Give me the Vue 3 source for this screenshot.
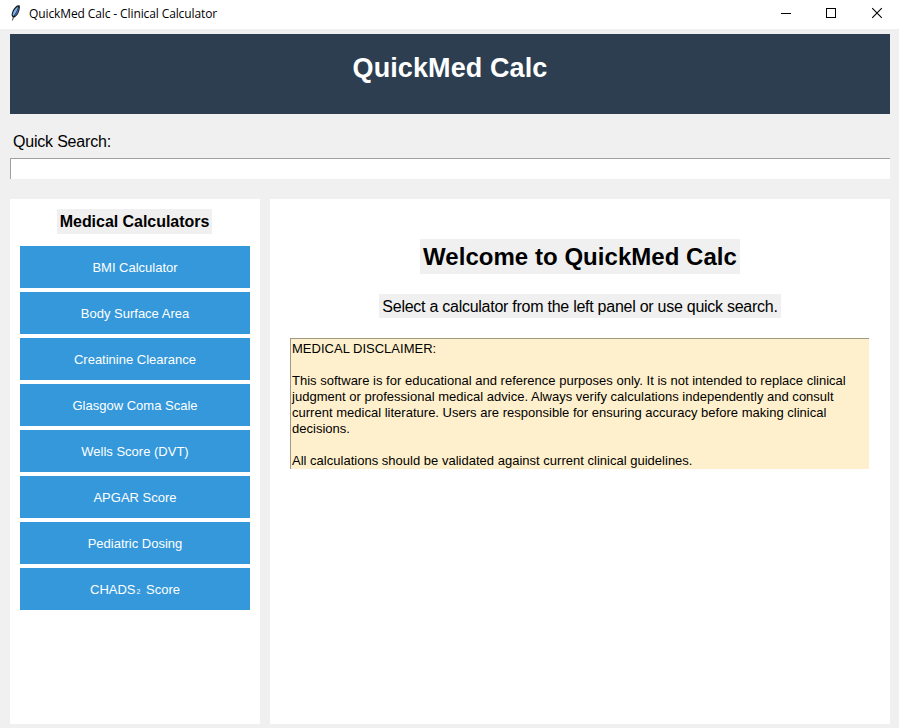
<script setup>
import { ref } from 'vue'

const query = ref('')
const calculators = [
  { label: 'BMI Calculator' },
  { label: 'Body Surface Area' },
  { label: 'Creatinine Clearance' },
  { label: 'Glasgow Coma Scale' },
  { label: 'Wells Score (DVT)' },
  { label: 'APGAR Score' },
  { label: 'Pediatric Dosing' },
  { label: 'CHADS', sub: '2', tail: ' Score' },
]
const disclaimer = [
  'MEDICAL DISCLAIMER:',
  '',
  'This software is for educational and reference purposes only. It is not intended to replace clinical',
  'judgment or professional medical advice. Always verify calculations independently and consult',
  'current medical literature. Users are responsible for ensuring accuracy before making clinical',
  'decisions.',
  '',
  'All calculations should be validated against current clinical guidelines.',
]
</script>

<template>
  <div class="window">
    <div class="titlebar">
      <svg class="feather" width="12" height="18" viewBox="0 0 12 18">
        <path d="M3.2 16.5 L3.8 13.5 L2.6 11.5 C2.6 7.5 5.6 2.4 9 1.2 L10.8 1.4 C11.2 5 9.8 10.6 5.6 13.4 L4.6 13.4 L4 16.5 Z" fill="#14181e" />
        <path d="M3.6 11 C4 7.5 6.4 3.8 9 2.4 C9 5 7 8.5 4.6 12 Z" fill="#7fb2e6" />
        <path d="M9.8 2.8 C10.2 6.5 8.6 10 5.8 12.2 L5.4 11.8 C7.4 8.8 9 6 9.8 2.8 Z" fill="#4478b5" />
      </svg>
      <span class="caption">QuickMed Calc - Clinical Calculator</span>
      <div class="controls">
        <svg width="46" height="28" viewBox="0 0 46 28" shape-rendering="crispEdges"><path d="M18 13.5H28" stroke="#000" /></svg>
        <svg width="46" height="28" viewBox="0 0 46 28" shape-rendering="crispEdges"><rect x="17.5" y="8.5" width="9" height="9" fill="none" stroke="#000" /></svg>
        <svg width="46" height="28" viewBox="0 0 46 28"><path d="M17.2 8.2L26.8 17.8M26.8 8.2L17.2 17.8" stroke="#000" stroke-width="1.1" /></svg>
      </div>
    </div>

    <header class="banner"><h1>QuickMed Calc</h1></header>

    <label class="search-label" for="search"><span>Quick Search:</span></label>
    <input id="search" v-model="query" class="search" type="text" autocomplete="off" />

    <main class="content">
      <nav class="sidebar">
        <h2>Medical Calculators</h2>
        <button v-for="c in calculators" :key="c.label" type="button">
          <span>{{ c.label }}<small v-if="c.sub">{{ c.sub }}</small>{{ c.tail }}</span>
        </button>
      </nav>
      <section class="panel">
        <h2>Welcome to QuickMed Calc</h2>
        <p class="hint"><span>Select a calculator from the left panel or use quick search.</span></p>
        <div class="disclaimer">
          <div v-for="(line, i) in disclaimer" :key="i" class="line">{{ line }}</div>
        </div>
      </section>
    </main>
  </div>
</template>

<style>
body {
  margin: 0;
  background: #f0f0f0;
}
</style>

<style scoped>
.window {
  box-sizing: border-box;
  display: flex;
  flex-direction: column;
  height: 728px;
  padding-bottom: 4px;
  background: #f0f0f0;
  color: #000;
  font-family: "Liberation Sans", Arial, sans-serif;
  overflow: hidden;
  white-space: pre;
}
h1, h2, p { margin: 0; }
.titlebar {
  display: flex;
  align-items: flex-start;
  height: 29px;
  padding-left: 9px;
  background: #fff;
}
.feather { margin-top: 4px; }
.caption {
  margin-left: 8px;
  font: 12px/28px "Open Sans", sans-serif;
  letter-spacing: -0.11px;
}
.controls {
  display: flex;
  margin-left: auto;
  margin-right: -2px;
}
.banner {
  height: 80px;
  margin: 5px 9px 0 10px;
  background: #2c3e50;
  color: #fff;
  text-align: center;
}
h1 {
  font-size: 27px;
  line-height: 68px;
  letter-spacing: 0.1px;
}
.search-label {
  margin: 16px 0 0 13px;
  height: 28px;
  font-size: 16px;
  line-height: 24px;
  letter-spacing: -0.2px;
}
.search {
  box-sizing: border-box;
  height: 21px;
  margin: 0 9px 0 10px;
  padding: 0 2px;
  border: 0;
  border-top: 1px solid #a0a0a0;
  border-left: 1px solid #a0a0a0;
  background: #fff;
  font: 13px "Liberation Sans", sans-serif;
  outline: none;
}
.content {
  flex: 1;
  display: flex;
  gap: 10px;
  margin: 20px 9px 0 10px;
}
.sidebar {
  box-sizing: border-box;
  width: 250px;
  padding: 10px;
  display: flex;
  flex-direction: column;
  align-items: center;
  gap: 4px;
  background: #fff;
}
.sidebar h2 {
  width: 155px;
  height: 25px;
  margin-right: 1px;
  margin-bottom: 8px;
  background: #f0f0f0;
  font-size: 16px;
  line-height: 25px;
  letter-spacing: -0.04px;
  text-align: center;
}
button {
  width: 230px;
  height: 42px;
  padding: 2px 0 0;
  border: 0;
  background: #3498db;
  color: #fff;
  font: 13px/40px "Liberation Sans", sans-serif;
  white-space: pre;
}
small { font-size: 7px; padding: 0 2px 0 1px; }
.panel {
  flex: 1;
  display: flex;
  flex-direction: column;
  align-items: center;
  padding: 40px 20px 0;
  background: #fff;
}
.panel h2 {
  width: 320px;
  height: 35px;
  background: #f0f0f0;
  font-size: 24px;
  line-height: 36px;
  letter-spacing: 0.04px;
  text-align: center;
}
.hint {
  width: 402px;
  height: 24px;
  margin: 20px 0;
  background: #f0f0f0;
  font-size: 16px;
  line-height: 25px;
  letter-spacing: -0.26px;
  text-align: center;
}
.disclaimer {
  box-sizing: border-box;
  align-self: stretch;
  height: 131px;
  margin-right: 1px;
  padding: 2px 0 0 1px;
  border-top: 1px solid #a09880;
  border-left: 1px solid #a09880;
  background: #fff0cd;
  font-size: 13px;
  line-height: 16px;
  letter-spacing: 0.012px;
}
.line { height: 16px; }
</style>
